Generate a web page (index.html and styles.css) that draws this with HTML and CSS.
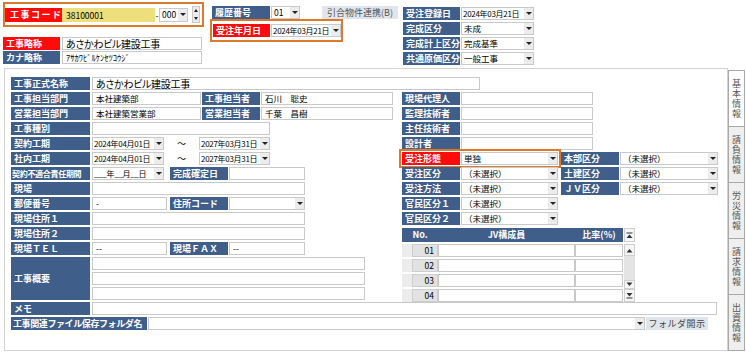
FILE: index.html
```html
<!DOCTYPE html>
<html>

<head>
  <meta charset="utf-8">
  <link rel="stylesheet" href="styles.css">
</head>

<body>
  <div class="page">
    <!-- ヘッダー部 -->
    <div class="head">
      <div class="head-a">
        <div class="code-box">
          <span class="lb red code-lb">工事コード</span>
          <span class="box code-val">38100001</span>
          <span class="dash">-</span>
          <span class="sel code-sub"><span class="txt">000</span><i class="arr"></i></span>
          <span class="spin"><i class="up"></i><i class="dn"></i></span>
        </div>
        <div class="row short-first">
          <span class="lb red lb-head">工事略称</span>
          <span class="box short-val big">あさかわビル建設工事</span>
        </div>
        <div class="row short-second">
          <span class="lb lb-head">カナ略称</span>
          <span class="box short-val">ｱｻｶﾜﾋﾞﾙｹﾝｾﾂｺｳｼﾞ</span>
        </div>
      </div>

      <div class="head-b">
        <div class="row rev-row">
          <span class="lb lb-rev">履歴番号</span>
          <span class="sel rev-sel"><span class="txt">01</span><i class="arr"></i></span>
          <span class="btn link-btn">引合物件連携(B)</span>
        </div>
        <div class="date-box">
          <span class="lb red lb-date">受注年月日</span>
          <span class="sel date-sel"><span class="txt d">2024年03月21日</span><i class="arr"></i></span>
        </div>
      </div>

      <div class="head-c">
        <div class="row">
          <span class="lb lb-head">受注登録日</span>
          <span class="sel status-sel"><span class="txt d">2024年03月21日</span><i class="arr"></i></span>
        </div>
        <div class="row">
          <span class="lb lb-head">完成区分</span>
          <span class="sel status-sel"><span class="txt">未成</span><i class="arr"></i></span>
        </div>
        <div class="row">
          <span class="lb lb-head">完成計上区分</span>
          <span class="sel status-sel"><span class="txt">完成基準</span><i class="arr"></i></span>
        </div>
        <div class="row">
          <span class="lb lb-head">共通原価区分</span>
          <span class="sel status-sel"><span class="txt">一般工事</span><i class="arr"></i></span>
        </div>
      </div>
    </div>

    <!-- 基本情報パネル -->
    <div class="main">
      <div class="panel">
        <div class="row">
          <span class="lb lb-main">工事正式名称</span>
          <span class="box formal-val big">あさかわビル建設工事</span>
        </div>

        <div class="cols">
          <div class="col-l">
            <div class="row">
              <span class="lb lb-main">工事担当部門</span>
              <span class="box v-dept">本社建築部</span>
              <span class="lb lb-sub">工事担当者</span>
              <span class="box v-person">石川　聡史</span>
            </div>
            <div class="row">
              <span class="lb lb-main">営業担当部門</span>
              <span class="box v-dept">本社建築営業部</span>
              <span class="lb lb-sub">営業担当者</span>
              <span class="box v-person">千葉　昌樹</span>
            </div>
            <div class="row">
              <span class="lb lb-main">工事種別</span>
              <span class="box v-kind"></span>
            </div>
            <div class="row">
              <span class="lb lb-main">契約工期</span>
              <span class="sel v-date"><span class="txt d">2024年04月01日</span><i class="arr"></i></span>
              <span class="tilde">～</span>
              <span class="sel v-date2"><span class="txt d">2027年03月31日</span><i class="arr"></i></span>
            </div>
            <div class="row">
              <span class="lb lb-main">社内工期</span>
              <span class="sel v-date"><span class="txt d">2024年04月01日</span><i class="arr"></i></span>
              <span class="tilde">～</span>
              <span class="sel v-date2"><span class="txt d">2027年03月31日</span><i class="arr"></i></span>
            </div>
            <div class="row">
              <span class="lb lb-main lb-tight">契約不適合責任期間</span>
              <span class="sel v-date"><span class="txt d">___年__月__日</span><i class="arr"></i></span>
              <span class="lb lb-sub after-date">完成確定日</span>
              <span class="box v-short"></span>
            </div>
            <div class="row">
              <span class="lb lb-main">現場</span>
              <span class="box v-site"></span>
            </div>
            <div class="row">
              <span class="lb lb-main">郵便番号</span>
              <span class="box v-tel">-</span>
              <span class="lb lb-sub after-tel">住所コード</span>
              <span class="sel v-short"><span class="txt"></span><i class="arr"></i></span>
            </div>
            <div class="row">
              <span class="lb lb-main">現場住所１</span>
              <span class="box v-site"></span>
            </div>
            <div class="row">
              <span class="lb lb-main">現場住所２</span>
              <span class="box v-site"></span>
            </div>
            <div class="row">
              <span class="lb lb-main">現場ＴＥＬ</span>
              <span class="box v-tel">--</span>
              <span class="lb lb-sub after-tel">現場ＦＡＸ</span>
              <span class="box v-short">--</span>
            </div>
            <div class="summary">
              <span class="lb lb-main lb-tall">工事概要</span>
              <div class="summary-lines">
                <span class="box v-summary"></span>
                <span class="box v-summary"></span>
                <span class="box v-summary"></span>
              </div>
            </div>
          </div>

          <div class="col-r">
            <div class="row">
              <span class="lb lb-sub">現場代理人</span>
              <span class="box v-person"></span>
            </div>
            <div class="row">
              <span class="lb lb-sub">監理技術者</span>
              <span class="box v-person"></span>
            </div>
            <div class="row">
              <span class="lb lb-sub">主任技術者</span>
              <span class="box v-person"></span>
            </div>
            <div class="row">
              <span class="lb lb-sub">設計者</span>
              <span class="box v-person"></span>
            </div>
            <div class="row">
              <span class="pair marked">
                <span class="lb red lb-sub">受注形態</span>
                <span class="sel v-kbn"><span class="txt">単独</span><i class="arr"></i></span>
              </span>
              <span class="lb lb-sub after-kbn">本部区分</span>
              <span class="sel v-kbn2"><span class="txt">（未選択）</span><i class="arr"></i></span>
            </div>
            <div class="row">
              <span class="pair">
                <span class="lb lb-sub">受注区分</span>
                <span class="sel v-kbn"><span class="txt">（未選択）</span><i class="arr"></i></span>
              </span>
              <span class="lb lb-sub after-kbn">土建区分</span>
              <span class="sel v-kbn2"><span class="txt">（未選択）</span><i class="arr"></i></span>
            </div>
            <div class="row">
              <span class="pair">
                <span class="lb lb-sub">受注方法</span>
                <span class="sel v-kbn"><span class="txt">（未選択）</span><i class="arr"></i></span>
              </span>
              <span class="lb lb-sub after-kbn">ＪＶ区分</span>
              <span class="sel v-kbn2"><span class="txt">（未選択）</span><i class="arr"></i></span>
            </div>
            <div class="row">
              <span class="lb lb-sub">官民区分１</span>
              <span class="sel v-kbn"><span class="txt">（未選択）</span><i class="arr"></i></span>
            </div>
            <div class="row">
              <span class="lb lb-sub">官民区分２</span>
              <span class="sel v-kbn"><span class="txt">（未選択）</span><i class="arr"></i></span>
            </div>

            <div class="jv">
              <div class="jv-h jv-no">No.</div>
              <div class="jv-h">JV構成員</div>
              <div class="jv-h">比率(%)</div>
              <div class="jv-scroll">
                <span class="sb"><svg width="7" height="7" viewBox="0 0 7 7"><rect x="0.5" y="0.5" width="6" height="1" fill="#333"/><path d="M0.5 6L3.5 2.5L6.5 6Z" fill="#333"/></svg></span>
                <span class="sb"><svg width="7" height="5" viewBox="0 0 7 5"><path d="M0.5 4.5L3.5 1L6.5 4.5Z" fill="#333"/></svg></span>
                <span class="track"></span>
                <span class="sb sb-down"><svg width="7" height="5" viewBox="0 0 7 5"><path d="M0.5 0.5L3.5 4L6.5 0.5Z" fill="#333"/></svg></span>
                <span class="sb sb-last"><svg width="7" height="7" viewBox="0 0 7 7"><path d="M0.5 1L3.5 4.5L6.5 1Z" fill="#333"/><rect x="0.5" y="5.5" width="6" height="1" fill="#333"/></svg></span>
              </div>

              <span class="jv-stub"></span><span class="jv-num">01</span><span class="box"></span><span class="box"></span>
              <span class="jv-stub"></span><span class="jv-num">02</span><span class="box"></span><span class="box"></span>
              <span class="jv-stub"></span><span class="jv-num">03</span><span class="box"></span><span class="box"></span>
              <span class="jv-stub"></span><span class="jv-num">04</span><span class="box"></span><span class="box"></span>
            </div>
          </div>
        </div>

        <div class="row">
          <span class="lb lb-main">メモ</span>
          <span class="box v-memo"></span>
        </div>
        <div class="row file-row">
          <span class="lb lb-file">工事関連ファイル保存フォルダ名</span>
          <span class="sel v-folder"><span class="txt"></span><i class="arr"></i></span>
          <span class="btn folder-btn">フォルダ開示</span>
        </div>
      </div>

      <div class="tabs">
        <div class="tab active">基本情報</div>
        <div class="tab">請負情報</div>
        <div class="tab">労災情報</div>
        <div class="tab">請求情報</div>
        <div class="tab">出資情報</div>
      </div>
    </div>
  </div>
</body>

</html>
```

FILE: styles.css
```css
* {
  box-sizing: border-box;
}

body {
  margin: 0;
  background-color: #fff;
  font-family: "Noto Sans CJK JP", sans-serif;
  font-size: 8.5px;
  color: #000;
}

.page {
  width: 746px;
  height: 353px;
  overflow: hidden;
}

/* 共通部品 */
.row {
  display: flex;
  align-items: center;
  gap: 1px;
  height: 13px;
}

.lb {
  flex: none;
  height: 13px;
  line-height: 13px;
  padding-left: 3px;
  background-color: #3f5e8a;
  color: #fff;
  font-size: 9px;
  font-weight: bold;
  white-space: nowrap;
  overflow: hidden;
}

.lb.red {
  background-color: #ff0b0b;
}

.box {
  flex: none;
  display: block;
  height: 13px;
  line-height: 11px;
  padding: 0 3px;
  border: 1px solid #c9c9c9;
  background-color: #fff;
  white-space: nowrap;
  overflow: hidden;
}

.big {
  font-size: 10px;
  font-feature-settings: "palt";
  letter-spacing: -0.3px;
}

.sel {
  flex: none;
  display: flex;
  height: 13px;
  border: 1px solid #c9c9c9;
  background-color: #fff;
}

.sel .txt {
  flex: 1;
  line-height: 11px;
  padding-left: 2px;
  white-space: nowrap;
  overflow: hidden;
}

.sel .txt.d {
  padding-left: 1px;
  font-size: 8px;
  letter-spacing: -0.3px;
}

.sel .arr {
  flex: none;
  width: 9px;
  display: flex;
  align-items: center;
  justify-content: center;
  background-color: #ececec;
}

.sel .arr::after {
  content: "";
  border-left: 3px solid transparent;
  border-right: 3px solid transparent;
  border-top: 3px solid #222;
}

.btn {
  flex: none;
  height: 13px;
  line-height: 13px;
  text-align: center;
  background-color: #e0e5eb;
  color: #555;
  font-size: 9px;
  white-space: nowrap;
  overflow: hidden;
}

/* ヘッダー */
.head {
  display: flex;
  height: 68px;
}

.head-a {
  margin-left: 3px;
  width: 201px;
}

.code-box {
  display: flex;
  align-items: center;
  margin-top: 2px;
  height: 25px;
  border: 2px solid #dc7a2c;
}

.code-lb {
  width: 57px;
  height: 14px;
  line-height: 14px;
  padding-left: 5px;
  letter-spacing: 1.5px;
}

.code-val {
  width: 93px;
  height: 14px;
  line-height: 12px;
  background-color: #ecdf7c;
  border-color: #ecdf7c;
}

.dash {
  width: 4px;
  text-align: center;
}

.code-sub {
  width: 29px;
  height: 14px;
}

.spin {
  margin-left: 4px;
  width: 8px;
  height: 17px;
  display: flex;
  flex-direction: column;
  border: 1px solid #c9c9c9;
  background-color: #ececec;
}

.spin i {
  flex: 1;
  display: flex;
  align-items: center;
  justify-content: center;
}

.spin .up::after {
  content: "";
  border-left: 2.5px solid transparent;
  border-right: 2.5px solid transparent;
  border-bottom: 3px solid #222;
}

.spin .dn::after {
  content: "";
  border-left: 2.5px solid transparent;
  border-right: 2.5px solid transparent;
  border-top: 3px solid #222;
}

.short-first {
  margin-top: 10px;
}

.short-second {
  margin-top: 1px;
}

.lb-head {
  width: 57px;
}

.short-val {
  width: 140px;
  margin-left: 1px;
}

.head-b {
  margin-left: 6px;
  width: 187px;
}

.rev-row {
  margin-top: 6px;
  padding-left: 2px;
}

.lb-rev {
  width: 58px;
}

.rev-sel {
  width: 29px;
}

.link-btn {
  margin-left: 21px;
  width: 76px;
}

.date-box {
  display: flex;
  align-items: center;
  gap: 1px;
  width: 133px;
  height: 23px;
  padding-left: 1px;
  border: 2px solid #dc7a2c;
}

.lb-date {
  width: 57px;
}

.date-sel {
  width: 70px;
}

.head-c {
  margin-left: 6px;
  margin-top: 7px;
  display: flex;
  flex-direction: column;
  gap: 2px;
}

.status-sel {
  width: 73px;
}

/* メインパネル */
.main {
  display: flex;
}

.panel {
  margin-left: 4px;
  width: 724px;
  height: 283px;
  padding: 8px 0 0 6px;
  border: 1px solid #d2d2d2;
}

.lb-main {
  width: 79px;
  margin-right: 1px;
}

.lb-tight {
  font-size: 8px;
  padding-left: 1px;
  letter-spacing: -0.3px;
}

.lb-sub {
  width: 58px;
}

.formal-val {
  width: 388px;
}

.cols {
  display: flex;
  align-items: flex-start;
  margin-top: 2px;
}

.col-l {
  width: 382px;
  display: flex;
  flex-direction: column;
  gap: 2px;
}

.col-r {
  margin-left: 9px;
  width: 316px;
  display: flex;
  flex-direction: column;
  gap: 2px;
}

.v-dept {
  width: 109px;
}

.v-person {
  width: 132px;
}

.v-kind {
  width: 178px;
}

.v-date {
  width: 72px;
}

.v-date2 {
  width: 71px;
}

.tilde {
  width: 33px;
  text-align: center;
  font-size: 9px;
}

.after-date {
  margin-left: 5px;
}

.v-short {
  width: 76px;
}

.v-site {
  width: 213px;
}

.v-tel {
  width: 75px;
}

.after-tel {
  margin-left: 2px;
}

.summary {
  display: flex;
  gap: 1px;
}

.lb-tall {
  height: 43px;
  line-height: 43px;
}

.summary-lines {
  display: flex;
  flex-direction: column;
  gap: 2px;
}

.v-summary {
  width: 273px;
}

.pair {
  display: flex;
  gap: 1px;
}

.pair.marked {
  outline: 2px solid #dc7a2c;
  outline-offset: 1px;
}

.v-kbn {
  width: 97px;
}

.after-kbn {
  margin-left: 2px;
}

.v-kbn2 {
  width: 98px;
}

/* JV構成員 */
.jv {
  margin-top: 1px;
  display: grid;
  grid-template-columns: 10px 26px 137px 48px 12px;
  grid-template-rows: 14px repeat(4, 13px);
  row-gap: 2px;
  width: 233px;
}

.jv-h {
  background-color: #3f5e8a;
  color: #fff;
  font-weight: bold;
  font-size: 9px;
  line-height: 14px;
  text-align: center;
}

.jv-no {
  grid-column: span 2;
}

.jv-scroll {
  grid-column: 5;
  grid-row: 1 / -1;
  margin-left: 1px;
  display: flex;
  flex-direction: column;
}

.sb {
  flex: none;
  height: 12px;
  display: flex;
  align-items: center;
  justify-content: center;
  background-color: #f6f6f6;
  border: 1px solid #cfcfcf;
}

.sb:first-child {
  height: 14px;
  margin-bottom: 2px;
}

.track {
  flex: 1;
  background-color: #e4e4e4;
}

.sb-down {
  height: 9px;
}

.sb-last {
  height: 13px;
}

.jv-stub {
  background-color: #ececec;
}

.jv-num {
  background-color: #e2e2e2;
  border: 1px solid #cdcdcd;
  text-align: right;
  padding-right: 3px;
  line-height: 11px;
}

/* 下段 */
.v-memo {
  width: 625px;
}

.file-row {
  margin-top: 2px;
}

.lb-file {
  width: 136px;
  padding-left: 2px;
  letter-spacing: -0.4px;
}

.v-folder {
  width: 497px;
}

.folder-btn {
  width: 62px;
  letter-spacing: 0.5px;
  color: #444;
}

/* タブ */
.tabs {
  margin-top: 2px;
  width: 17px;
  height: 281px;
  display: flex;
  flex-direction: column;
}

.tab {
  flex: 1;
  display: flex;
  align-items: center;
  justify-content: center;
  writing-mode: vertical-rl;
  background-color: #efefef;
  border: 1px solid #a9a9a9;
  border-top: none;
  color: #555;
  font-size: 9px;
  letter-spacing: 1px;
}

.tab:first-child {
  border-top: 1px solid #a9a9a9;
}

.tab.active {
  background-color: #fff;
}
```
